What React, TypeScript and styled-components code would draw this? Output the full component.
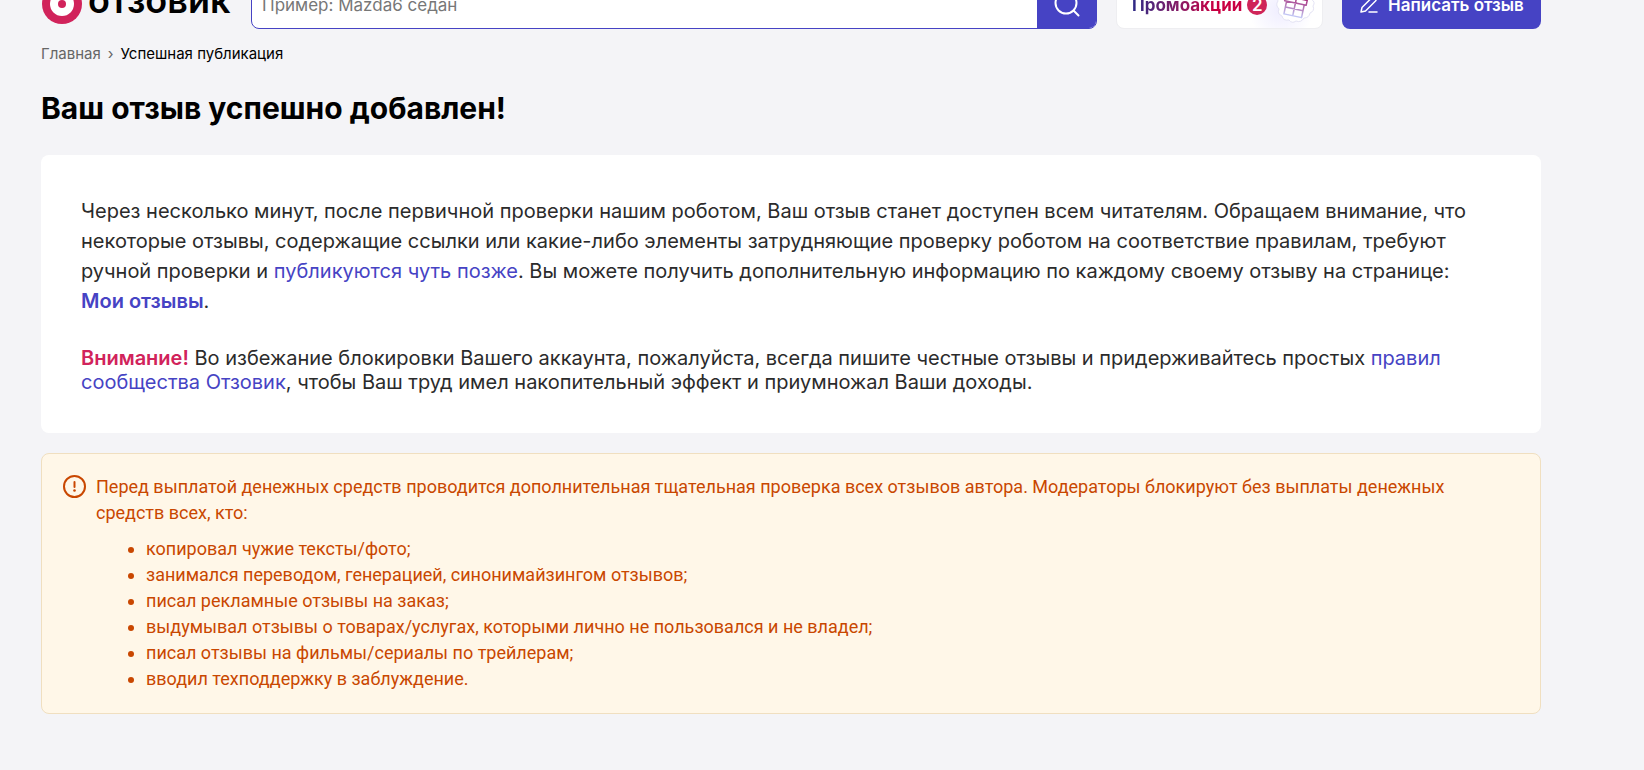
import React from 'react';
import styled, { createGlobalStyle } from 'styled-components';

const GlobalStyle = createGlobalStyle`
  * { box-sizing: border-box; }
  body {
    margin: 0;
    background: #f4f4f7;
    color: #2b2b2b;
    font-family: Inter, Roboto, "Liberation Sans", sans-serif;
  }
  a { color: #4643c4; text-decoration: none; }
`;

const Page = styled.div`
  display: flex;
  flex-direction: column;
  padding: 0 103px 56px 41px;
  overflow: hidden;
`;

const Header = styled.header`
  display: flex;
  align-items: center;
  gap: 19px;
  height: 48px;
  margin-top: -19px;
`;

const Logo = styled.a`
  && { color: #000; }
  display: flex;
  align-items: center;
  gap: 5px;
  width: 191px;
  height: 48px;
  font-size: 36px;
  font-weight: 600;
  line-height: 40px;
`;

const LogoText = styled.span`
  padding-bottom: 10px;
`;

const Search = styled.form`
  flex: 1;
  display: flex;
  height: 48px;
  border: 1px solid #4643c4;
  border-radius: 8px;
  background: #fff;
  overflow: hidden;
`;

const SearchInput = styled.input`
  flex: 1;
  min-width: 0;
  border: 0;
  outline: 0;
  padding: 0 10px;
  background: transparent;
  font: 400 17px/24px Inter, Roboto, sans-serif;
  &::placeholder { color: #777; opacity: 1; }
`;

const SearchButton = styled.button`
  display: flex;
  align-items: center;
  justify-content: center;
  width: 59px;
  border: 0;
  padding: 0;
  background: #4643c4;
`;

const Promo = styled.a`
  display: flex;
  align-items: center;
  gap: 5px;
  width: 207px;
  height: 48px;
  padding-left: 15px;
  border: 1px solid #eeeef1;
  border-radius: 8px;
  background: radial-gradient(circle at 164px 28px, #efedff 0, #fff 32px);
`;

const PromoText = styled.span`
  font-size: 17px;
  font-weight: 700;
  line-height: 24px;
  color: transparent;
  background: linear-gradient(90deg, #2d2a86, #8b1a63 45%, #c90042 75%);
  background-clip: text;
  -webkit-background-clip: text;
`;

const Badge = styled.span`
  flex: none;
  width: 20px;
  height: 20px;
  margin-right: 3px;
  border-radius: 10px;
  background: #cf2459;
  color: #fff;
  font-size: 17px;
  font-weight: 600;
  line-height: 20px;
  text-align: center;
`;

const WriteButton = styled.button`
  display: flex;
  align-items: center;
  gap: 8px;
  width: 199px;
  height: 48px;
  padding: 0 0 0 16px;
  border: 0;
  border-radius: 8px;
  background: #4643c4;
  color: #fff;
  font: 600 17px/24px Inter, Roboto, sans-serif;
  white-space: nowrap;
`;

const Breadcrumbs = styled.nav`
  display: flex;
  gap: 7px;
  margin-top: 14px;
  font-size: 15px;
  line-height: 22px;
  color: #000;
  a, i { color: #666; font-style: normal; }
`;

const Title = styled.h1`
  margin: 24px 0 27px;
  color: #000;
  font-size: 30px;
  font-weight: 700;
  line-height: 39px;
`;

const Card = styled.section`
  padding: 41px 40px 39px;
  border-radius: 8px;
  background: #fff;
  font-size: 20px;
`;

const Paragraph = styled.p<{ $compact?: boolean }>`
  margin: ${(p) => (p.$compact ? '30px 0 0' : '0')};
  line-height: ${(p) => (p.$compact ? '24px' : '30px')};
`;

const StrongLink = styled.a`
  font-weight: 600;
  white-space: nowrap;
`;

const Attention = styled.strong`
  color: #d1235b;
  font-weight: 600;
`;

const Notice = styled.section`
  display: flex;
  gap: 9px;
  margin-top: 20px;
  padding: 20px 60px 21px 20px;
  border: 1px solid #f0dfc0;
  border-radius: 8px;
  background: #fff7e8;
  color: #c94700;
  font-family: Roboto, Inter, sans-serif;
  font-size: 18px;
  line-height: 26px;
  svg { flex: none; }
  p { margin: 0; }
`;

const Reasons = styled.ul`
  margin: 10px 0 0;
  padding-left: 50px;
`;

const reasons = [
  'копировал чужие тексты/фото;',
  'занимался переводом, генерацией, синонимайзингом отзывов;',
  'писал рекламные отзывы на заказ;',
  'выдумывал отзывы о товарах/услугах, которыми лично не пользовался и не владел;',
  'писал отзывы на фильмы/сериалы по трейлерам;',
  'вводил техподдержку в заблуждение.',
];

const LogoMark = () => (
  <svg width="42" height="42" viewBox="0 0 42 42" aria-hidden="true">
    <circle cx="21" cy="20" r="20" fill="#d1235b" />
    <circle cx="21" cy="20" r="12" fill="#fff" />
    <circle cx="21" cy="20" r="4" fill="#d1235b" />
  </svg>
);

const SearchIcon = () => (
  <svg width="28" height="28" viewBox="0 0 28 28" fill="none" stroke="#fff" strokeWidth="2" strokeLinecap="round" aria-hidden="true">
    <circle cx="13" cy="12" r="10.500" />
    <path d="M20.500 19.500 L25.500 24.500" />
  </svg>
);

const GiftIcon = () => (
  <svg width="40" height="40" viewBox="0 0 40 40" fill="none" strokeLinejoin="round" strokeLinecap="round" aria-hidden="true">
    <defs>
      <linearGradient id="gift" gradientUnits="userSpaceOnUse" x1="0" y1="13" x2="0" y2="32">
        <stop offset="0" stopColor="#a8327f" />
        <stop offset="1" stopColor="#c3cdfa" />
      </linearGradient>
    </defs>
    <path
      d="M20 1 Q24 -1 26 3 Q31 2 32 7 Q37 9 36 14 Q41 17 38 21 Q40 26 35 28 Q34 33 29 33 Q26 38 21 36 Q17 39 14 35 Q8 36 7 31 Q2 29 4 24 Q0 20 3 16 Q1 11 6 9 Q7 4 12 4 Q15 -1 20 1Z"
      fill="#fff" stroke="#e4e3f4"
    />
    <g stroke="url(#gift)" strokeWidth="1.500" transform="rotate(12 20 20)">
      <path d="M11 18 V31 H29 V18 M9 13 H31 V18 H9 Z M20 13 V31 M11 24 H29" />
      <path d="M20 13 C14 12 13 7 16 6 C19 6 20 10 20 13 C20 10 22 6 25 7 C27 9 25 13 20 13" />
    </g>
  </svg>
);

const PenIcon = () => (
  <svg width="22" height="22" viewBox="0 0 22 22" fill="none" stroke="#fff" strokeWidth="1.500" strokeLinecap="round" strokeLinejoin="round" aria-hidden="true">
    <path d="M3 18 L4 13.500 L14 3.500 Q16 2 17.500 3.500 Q19 5 17.500 7 L7.500 17 Z M11 18 H19" />
  </svg>
);

const AlertIcon = () => (
  <svg width="25" height="26" viewBox="0 0 25 26" aria-hidden="true">
    <circle cx="12.500" cy="12.500" r="10.500" fill="none" stroke="#c94700" strokeWidth="2" />
    <path d="M12.500 8 V13" stroke="#c94700" strokeWidth="2" strokeLinecap="round" />
    <circle cx="12.500" cy="16.500" r="1.300" fill="#c94700" />
  </svg>
);

export default function App() {
  return (
    <>
      <GlobalStyle />
      <Page>
        <Header>
          <Logo href="#">
            <LogoMark />
            <LogoText>отзовик</LogoText>
          </Logo>
          <Search role="search">
            <SearchInput type="search" aria-label="Поиск" placeholder="Пример: Mazda6 седан" />
            <SearchButton type="button" aria-label="Найти">
              <SearchIcon />
            </SearchButton>
          </Search>
          <Promo href="#">
            <PromoText>Промоакции</PromoText>
            <Badge>2</Badge>
            <GiftIcon />
          </Promo>
          <WriteButton type="button">
            <PenIcon />
            Написать отзыв
          </WriteButton>
        </Header>
        <Breadcrumbs>
          <a href="#">Главная</a>
          <i>›</i>
          <span>Успешная публикация</span>
        </Breadcrumbs>
        <main>
          <Title>Ваш отзыв успешно добавлен!</Title>
          <Card>
            <Paragraph>
              Через несколько минут, после первичной проверки нашим роботом, Ваш отзыв станет доступен всем читателям.
              Обращаем внимание, что некоторые отзывы, содержащие ссылки или какие-либо элементы затрудняющие проверку
              роботом на соответствие правилам, требуют ручной проверки и <a href="#">публикуются чуть позже</a>. Вы
              можете получить дополнительную информацию по каждому своему отзыву на странице:{' '}
              <StrongLink href="#">Мои отзывы</StrongLink>.
            </Paragraph>
            <Paragraph $compact>
              <Attention>Внимание!</Attention> Во избежание блокировки Вашего аккаунта, пожалуйста, всегда пишите
              честные отзывы и придерживайтесь простых <a href="#">правил сообщества Отзовик</a>, чтобы Ваш труд имел
              накопительный эффект и приумножал Ваши доходы.
            </Paragraph>
          </Card>
          <Notice>
            <AlertIcon />
            <div>
              <p>
                Перед выплатой денежных средств проводится дополнительная тщательная проверка всех отзывов автора.
                Модераторы блокируют без выплаты денежных средств всех, кто:
              </p>
              <Reasons>
                {reasons.map((reason) => (
                  <li key={reason}>{reason}</li>
                ))}
              </Reasons>
            </div>
          </Notice>
        </main>
      </Page>
    </>
  );
}
